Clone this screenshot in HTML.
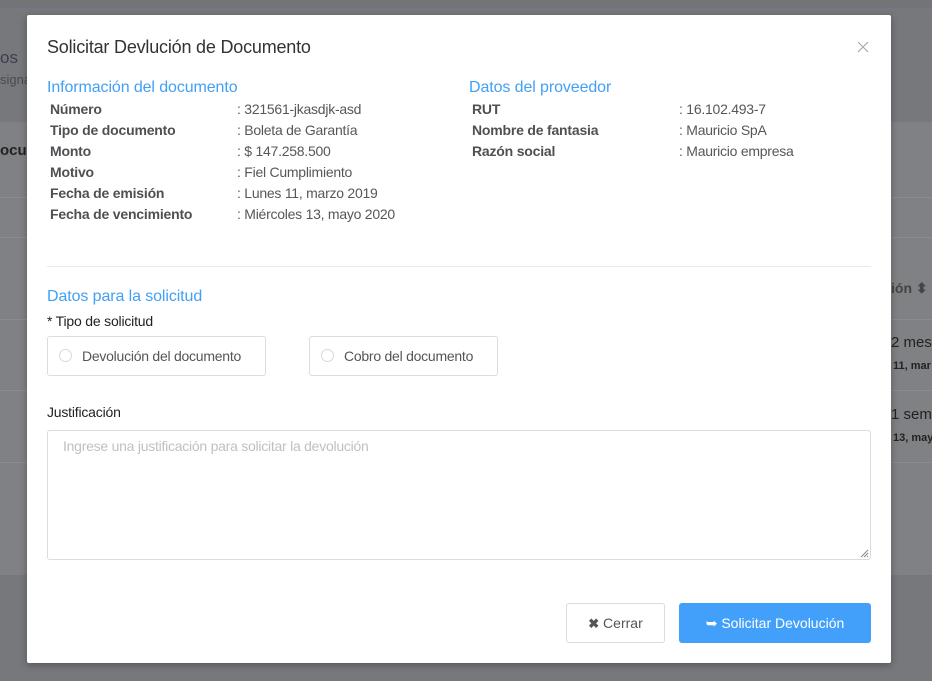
<!DOCTYPE html>
<html><head><meta charset="utf-8"><style>
*{box-sizing:border-box;margin:0;padding:0}
body{width:932px;height:681px;overflow:hidden;background:#77787c;font-family:"Liberation Sans",sans-serif;position:relative}
.abs{position:absolute}
.modal{position:absolute;left:27px;top:15px;width:864px;height:648px;background:#fff;border-radius:2px;box-shadow:0 2px 8px rgba(0,0,0,.3)}
.t{position:absolute;white-space:nowrap}
.lbl{font-weight:bold;color:#4f5054;font-size:14px;letter-spacing:-0.2px}
.val{color:#55575b;font-size:14px;letter-spacing:-0.25px}
.blue{color:#42a0f5;font-size:16px;letter-spacing:-0.1px}
</style></head><body>
<div class="abs" style="left:0;top:0;width:932px;height:8px;background:#737478"></div>
<div class="abs" style="left:0;top:8px;width:932px;height:1px;background:#6f7a8c"></div>
<div class="abs" style="left:0;top:122px;width:932px;height:453px;background:#808184"></div>
<div class="abs" style="left:0;top:197px;width:932px;height:1px;background:#8a8b8e"></div>
<div class="abs" style="left:0;top:237px;width:932px;height:1px;background:#8a8b8e"></div>
<div class="abs" style="left:0;top:319px;width:932px;height:1px;background:#8a8b8e"></div>
<div class="abs" style="left:0;top:390px;width:932px;height:1px;background:#8a8b8e"></div>
<div class="abs" style="left:0;top:462px;width:932px;height:1px;background:#8a8b8e"></div>
<div class="t" style="left:0;top:48px;font-size:17px;color:#3a3f4e">os</div>
<div class="t" style="left:0;top:72px;font-size:13px;color:#4a4b50">signa</div>
<div class="t" style="left:0;top:142px;font-size:15px;font-weight:bold;color:#222">ocur</div>
<div class="t" style="left:891px;top:280px;font-size:14px;font-weight:bold;color:#444">ión ⬍</div>
<div class="t" style="left:891px;top:334px;font-size:15px;color:#222">2 mese</div>
<div class="t" style="left:893px;top:360px;font-size:11px;font-weight:bold;color:#222">11, mar</div>
<div class="t" style="left:891px;top:406px;font-size:15px;color:#222">1 sema</div>
<div class="t" style="left:893px;top:432px;font-size:11px;font-weight:bold;color:#222">13, may</div>

<div class="modal">
<div class="t" style="left:20px;top:22px;font-size:18px;color:#333;letter-spacing:-0.2px">Solicitar Devlución de Documento</div>
<svg class="abs" style="left:830px;top:26px" width="12" height="12"><path d="M1 1L11 11M11 1L1 11" stroke="#aaa" stroke-width="1.2"/></svg>
<div class="t blue" style="left:20px;top:64px">Información del documento</div>
<div class="t lbl" style="left:23px;top:86px">Número</div><div class="t val" style="left:210px;top:86px">: 321561-jkasdjk-asd</div>
<div class="t lbl" style="left:23px;top:107px">Tipo de documento</div><div class="t val" style="left:210px;top:107px">: Boleta de Garantía</div>
<div class="t lbl" style="left:23px;top:128px">Monto</div><div class="t val" style="left:210px;top:128px">: $ 147.258.500</div>
<div class="t lbl" style="left:23px;top:149px">Motivo</div><div class="t val" style="left:210px;top:149px">: Fiel Cumplimiento</div>
<div class="t lbl" style="left:23px;top:170px">Fecha de emisión</div><div class="t val" style="left:210px;top:170px">: Lunes 11, marzo 2019</div>
<div class="t lbl" style="left:23px;top:191px">Fecha de vencimiento</div><div class="t val" style="left:210px;top:191px">: Miércoles 13, mayo 2020</div>
<div class="t blue" style="left:442px;top:64px">Datos del proveedor</div>
<div class="t lbl" style="left:445px;top:86px">RUT</div><div class="t val" style="left:652px;top:86px">: 16.102.493-7</div>
<div class="t lbl" style="left:445px;top:107px">Nombre de fantasia</div><div class="t val" style="left:652px;top:107px">: Mauricio SpA</div>
<div class="t lbl" style="left:445px;top:128px">Razón social</div><div class="t val" style="left:652px;top:128px">: Mauricio empresa</div>
<div class="abs" style="left:20px;top:251px;width:824px;height:1px;background:#e9e9ec"></div>
<div class="t blue" style="left:20px;top:273px">Datos para la solicitud</div>
<div class="t" style="left:20px;top:298px;font-size:14px;color:#222;letter-spacing:-0.2px">* Tipo de solicitud</div>
<div class="abs" style="left:20px;top:321px;width:219px;height:40px;border:1px solid #dcdce0;border-radius:3px"></div>
<div class="abs" style="left:32px;top:334px;width:13px;height:13px;border:1px solid #d8d8dc;border-radius:50%"></div>
<div class="t" style="left:55px;top:333px;font-size:14px;color:#555;letter-spacing:-0.25px">Devolución del documento</div>
<div class="abs" style="left:282px;top:321px;width:189px;height:40px;border:1px solid #dcdce0;border-radius:3px"></div>
<div class="abs" style="left:294px;top:334px;width:13px;height:13px;border:1px solid #d8d8dc;border-radius:50%"></div>
<div class="t" style="left:317px;top:333px;font-size:14px;color:#555;letter-spacing:-0.25px">Cobro del documento</div>
<div class="t" style="left:20px;top:389px;font-size:14px;color:#222;letter-spacing:-0.2px">Justificación</div>
<div class="abs" style="left:20px;top:415px;width:824px;height:130px;border:1px solid #dcdce0;border-radius:3px"></div>
<div class="t" style="left:36px;top:423px;font-size:14px;color:#c0c0c4;letter-spacing:-0.25px">Ingrese una justificación para solicitar la devolución</div>
<svg class="abs" style="left:832px;top:533px" width="10" height="10"><path d="M9 2L2 9M9 5L5 9M9 8L8 9" stroke="#888" stroke-width="1"/></svg>
<div class="abs" style="left:539px;top:588px;width:99px;height:40px;border:1px solid #dcdce0;border-radius:3px;font-size:14px;color:#555;text-align:center;line-height:38px"><b style="font-size:13px">✖</b> Cerrar</div>
<div class="abs" style="left:652px;top:588px;width:192px;height:40px;background:#42a0fa;border-radius:3px;font-size:14px;color:#fff;text-align:center;line-height:40px">➥ Solicitar Devolución</div>
</div>
</body></html>
